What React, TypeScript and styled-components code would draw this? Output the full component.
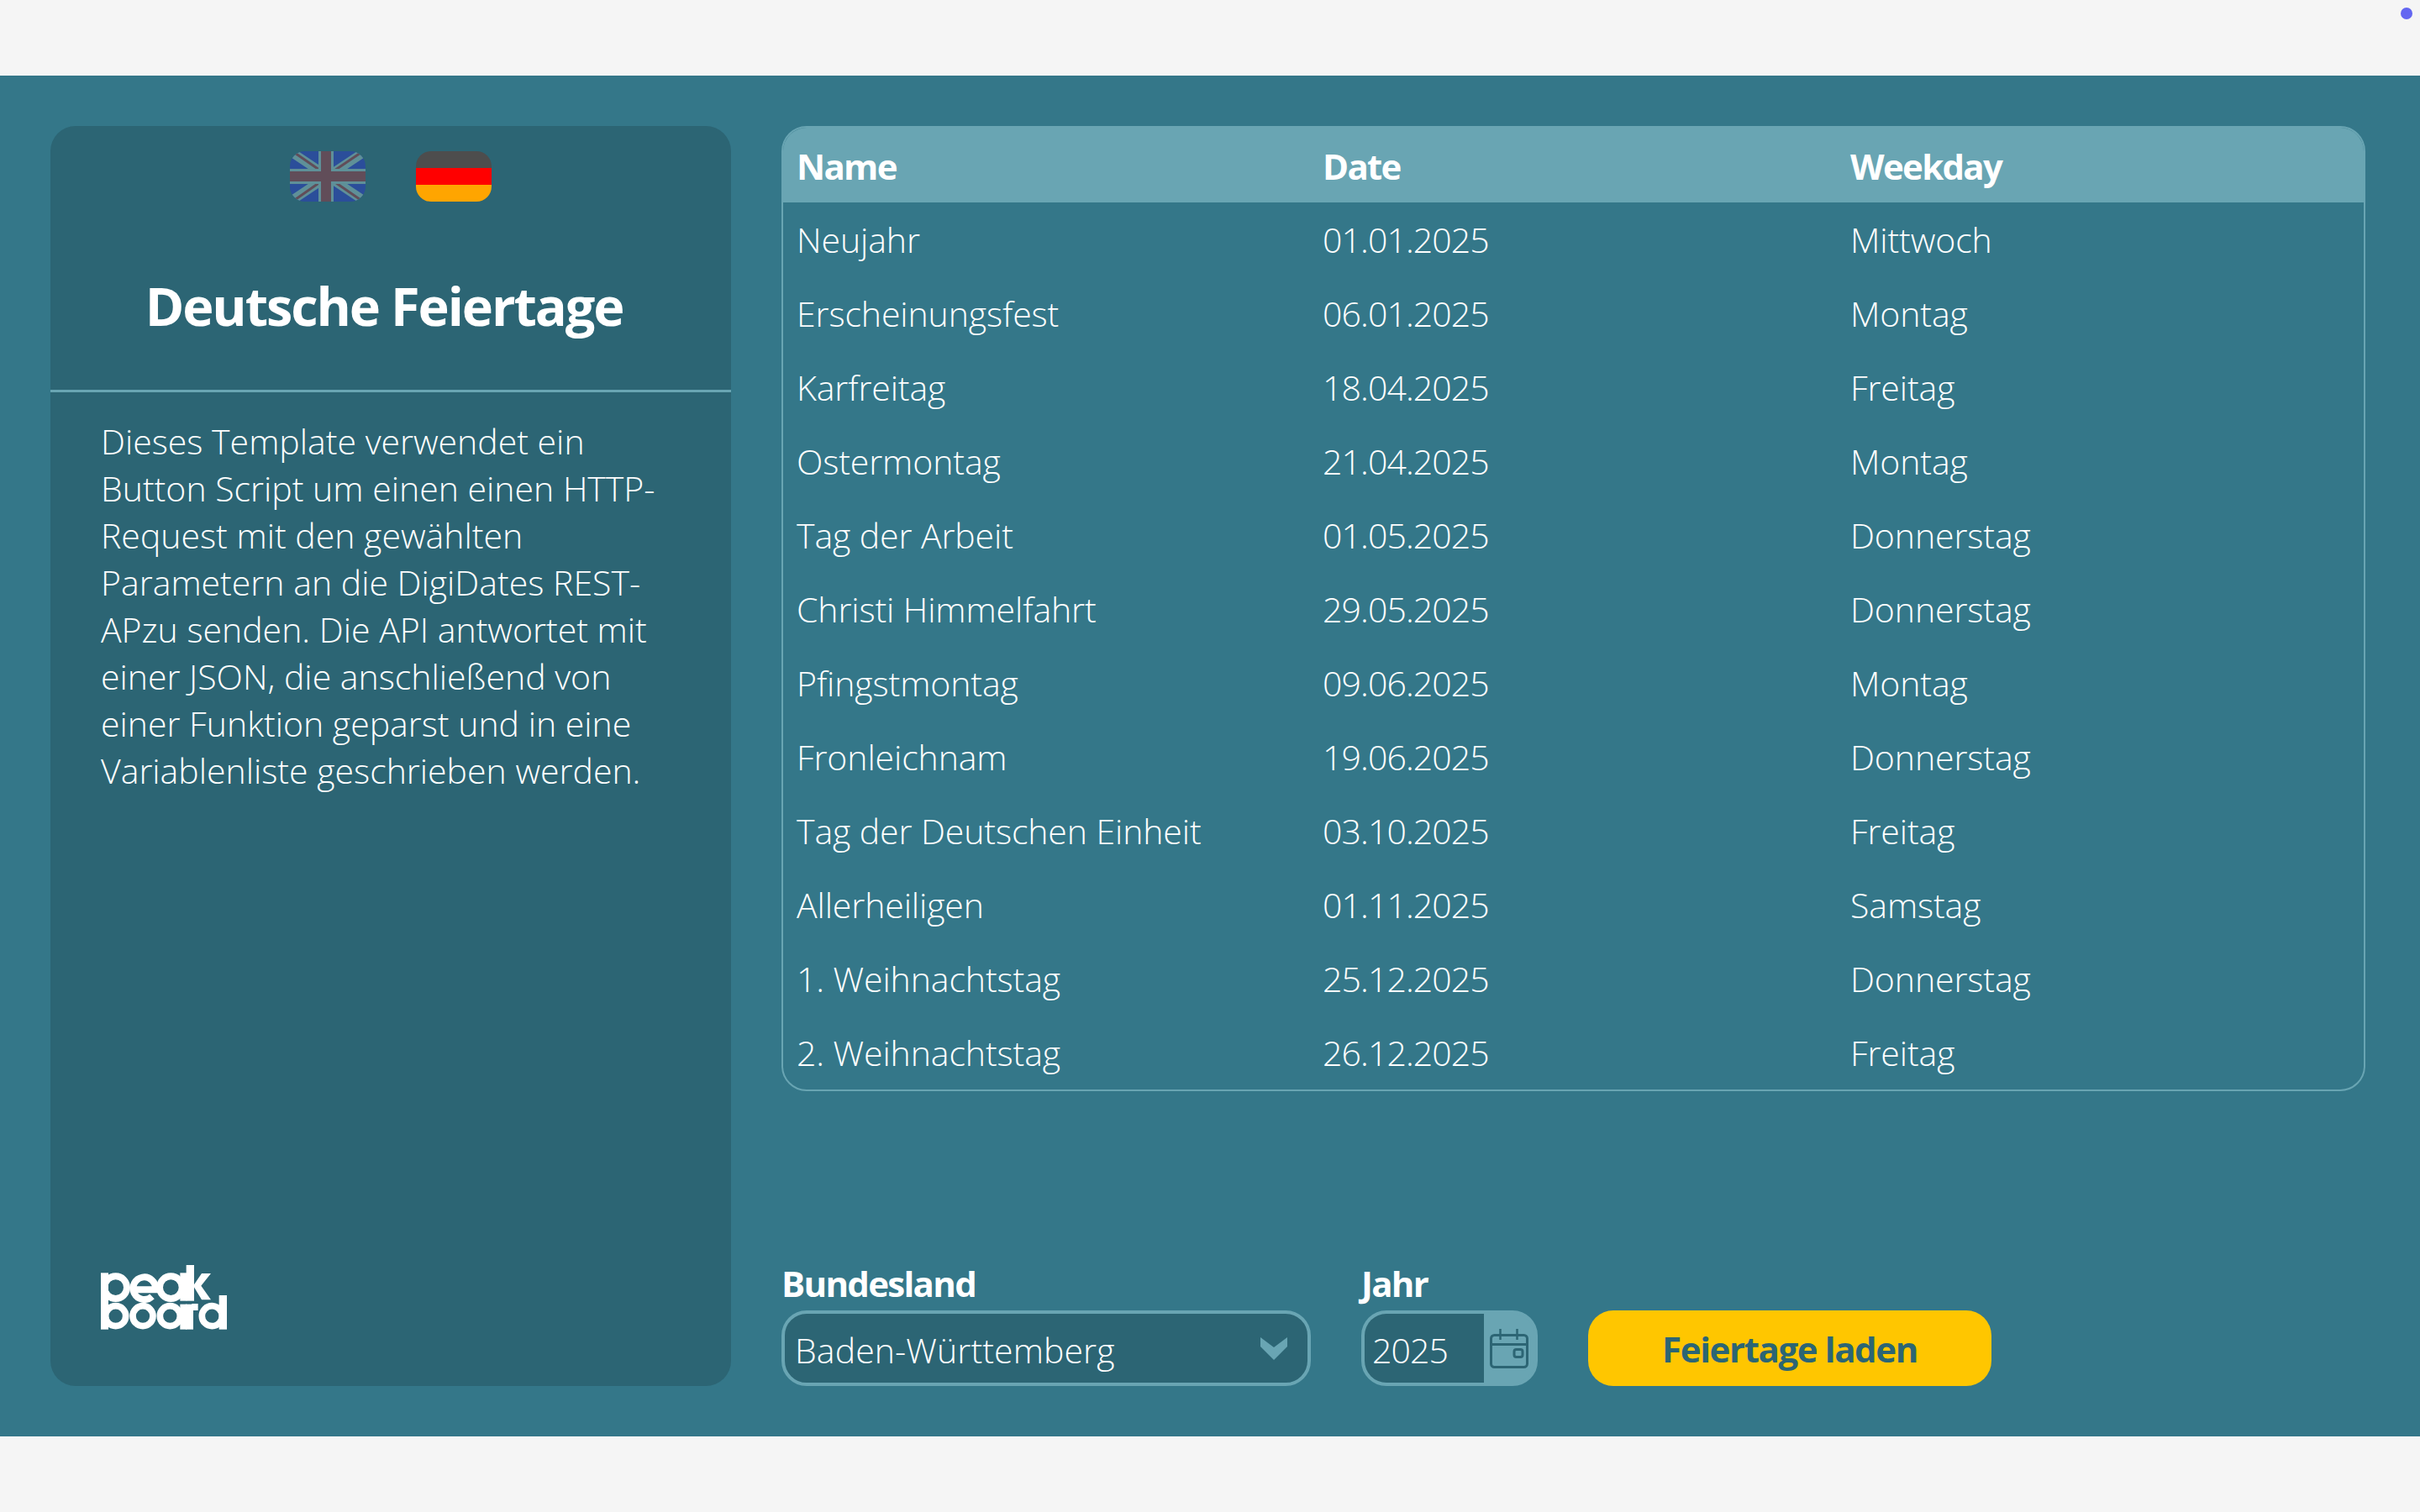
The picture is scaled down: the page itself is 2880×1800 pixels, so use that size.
import React from "react";
import styled, { createGlobalStyle } from "styled-components";

const Global = createGlobalStyle`
  html, body { margin: 0; padding: 0; background: #f5f5f5; }
  * { box-sizing: border-box; }
`;

const FONT = `"Open Sans", "Noto Sans", "Liberation Sans", sans-serif`;
const MAIN = "#347789";
const DARK = "#2c6574";
const LIGHT = "#69a5b3";

const Page = styled.div`
  position: relative;
  width: 2880px;
  height: 1800px;
  padding: 90px 0;
  background: #f5f5f5;
  font-family: ${FONT};
  color: #fff;
`;
const Dot = styled.span`
  position: absolute;
  top: 9px;
  right: 9px;
  width: 14px;
  height: 14px;
  border-radius: 50%;
  background: #6366f1;
`;
const Canvas = styled.main`
  display: flex;
  gap: 60px;
  height: 1620px;
  padding: 60px;
  background: ${MAIN};
`;
const Sidebar = styled.aside`
  display: flex;
  flex-direction: column;
  flex: 0 0 810px;
  border-radius: 30px;
  background: ${DARK};
`;
const SideHeader = styled.header`
  display: flex;
  flex-direction: column;
  align-items: center;
  height: 317px;
  padding-top: 30px;
  border-bottom: 3px solid ${LIGHT};
`;
const Flags = styled.div`
  display: flex;
  gap: 60px;
`;
const Flag = styled.svg`
  display: block;
  width: 90px;
  height: 60px;
  border-radius: 18px;
`;
const Title = styled.h1`
  margin: 83px 16px 0 0;
  font-size: 63px;
  line-height: 82px;
  font-weight: 700;
  letter-spacing: -2.1px;
`;
const Description = styled.p`
  margin: 0;
  padding: 30px 0 0 60px;
  font-size: 41px;
  line-height: 56px;
  font-weight: 300;
  letter-spacing: 0;
`;
const Logo = styled.svg`
  display: block;
  width: 160px;
  height: 90px;
  margin: auto 0 60px 55px;
`;
const Content = styled.section`
  display: flex;
  flex-direction: column;
  justify-content: space-between;
  flex: 1;
  min-width: 0;
`;
const Table = styled.table`
  width: 1885px;
  height: 1149px;
  table-layout: fixed;
  border-collapse: separate;
  border-spacing: 0;
  border: 2px solid ${LIGHT};
  border-radius: 30px;
  overflow: hidden;
`;
const HeadRow = styled.tr`
  height: 89px;
  background: ${LIGHT};
`;
const HeadCell = styled.th`
  padding: 2px 0 0 16px;
  text-align: left;
  font-size: 42px;
  font-weight: 700;
  letter-spacing: -1.7px;
  &:nth-child(1) { width: 626px; }
  &:nth-child(2) { width: 628px; }
`;
const Row = styled.tr`
  height: 88px;
`;
const Cell = styled.td`
  padding: 0 0 0 16px;
  font-size: 41px;
  font-weight: 300;
  letter-spacing: -0.1px;
  white-space: nowrap;
`;
const DateCell = styled(Cell)`
  letter-spacing: -0.9px;
`;
const Form = styled.form`
  display: flex;
  align-items: flex-end;
  gap: 60px;
  margin: 0;
`;
const Field = styled.div`
  display: flex;
  flex-direction: column;
`;
const Label = styled.label`
  height: 50px;
  font-size: 42px;
  line-height: 36px;
  font-weight: 700;
  letter-spacing: -1.7px;
`;
const Select = styled.div`
  display: flex;
  align-items: center;
  justify-content: space-between;
  width: 630px;
  height: 90px;
  padding: 0 24px 0 12px;
  border: 4px solid ${LIGHT};
  border-radius: 30px;
  background: ${DARK};
  font-size: 41px;
  font-weight: 300;
  letter-spacing: 0.1px;
`;
const SelectText = styled.span`
  padding-top: 3px;
`;
const Chevron = styled.svg`
  display: block;
  width: 32px;
  height: 27px;
`;
const DateBox = styled.div`
  display: flex;
  width: 210px;
  height: 90px;
  border: 4px solid ${LIGHT};
  border-radius: 30px;
  background: ${LIGHT};
`;
const DateValue = styled.div`
  display: flex;
  align-items: center;
  flex: 0 0 142px;
  padding: 3px 0 0 9px;
  border-radius: 26px 0 0 26px;
  background: ${DARK};
  font-size: 41px;
  font-weight: 300;
  letter-spacing: -0.9px;
`;
const DateIcon = styled.div`
  display: flex;
  align-items: center;
  justify-content: center;
  flex: 1;
`;
const CalendarSvg = styled.svg`
  display: block;
  width: 46px;
  height: 48px;
`;
const LoadButton = styled.button`
  width: 480px;
  height: 90px;
  padding: 0;
  border: 0;
  border-radius: 30px;
  background: #ffc600;
  color: ${DARK};
  font-family: ${FONT};
  font-size: 42px;
  font-weight: 700;
  letter-spacing: -1.4px;
`;

const holidays: [string, string, string][] = [
  ["Neujahr", "01.01.2025", "Mittwoch"],
  ["Erscheinungsfest", "06.01.2025", "Montag"],
  ["Karfreitag", "18.04.2025", "Freitag"],
  ["Ostermontag", "21.04.2025", "Montag"],
  ["Tag der Arbeit", "01.05.2025", "Donnerstag"],
  ["Christi Himmelfahrt", "29.05.2025", "Donnerstag"],
  ["Pfingstmontag", "09.06.2025", "Montag"],
  ["Fronleichnam", "19.06.2025", "Donnerstag"],
  ["Tag der Deutschen Einheit", "03.10.2025", "Freitag"],
  ["Allerheiligen", "01.11.2025", "Samstag"],
  ["1. Weihnachtstag", "25.12.2025", "Donnerstag"],
  ["2. Weihnachtstag", "26.12.2025", "Freitag"],
];

const lines = [
  "Dieses Template verwendet ein",
  "Button Script um einen einen HTTP-",
  "Request mit den gewählten",
  "Parametern an die DigiDates REST-",
  "APzu senden. Die API antwortet mit",
  "einer JSON, die anschließend von",
  "einer Funktion geparst und in eine",
  "Variablenliste geschrieben werden.",
];

const UkFlag = () => (
  <Flag viewBox="0 0 90 60" aria-label="English">
    <rect width="90" height="60" fill="#2b4e9a" />
    <path d="M0 0L90 60M90 0L0 60" stroke="#5f9098" strokeWidth="11" />
    <path d="M0 -2L42 27M90 -2L50 25M0 62L40 34M90 62L48 33" stroke="#614d59" strokeWidth="3" />
    <path d="M43 0V60M0 30H90" stroke="#5f9098" strokeWidth="18" />
    <path d="M43 0V60M0 30H90" stroke="#614d59" strokeWidth="12" />
  </Flag>
);

const DeFlag = () => (
  <Flag viewBox="0 0 90 60" aria-label="Deutsch">
    <rect width="90" height="20" fill="#4d4d4d" />
    <rect y="20" width="90" height="20" fill="#ff0000" />
    <rect y="40" width="90" height="20" fill="#ffa500" />
  </Flag>
);

const PeakboardLogo = () => (
  <Logo viewBox="0 0 480 270" aria-label="peakboard">
    <g fill="none" stroke="#fff">
      <g strokeWidth="24">
        <circle cx="68" cy="98" r="40" />
        <path d="M132 106H210A40 40 0 1 0 198 130" />
        <circle cx="265" cy="98" r="40" />
      </g>
      <g strokeWidth="23">
        <circle cx="68" cy="200" r="36" />
        <circle cx="165" cy="200" r="36" />
        <circle cx="262" cy="200" r="36" />
        <circle cx="412" cy="200" r="36" />
      </g>
    </g>
    <g fill="#fff">
      <rect x="15" y="46" width="27" height="202" />
      <rect x="298" y="46" width="24" height="100" />
      <rect x="320" y="18" width="28" height="128" />
      <path d="M345 92L375 48H408L373 92L408 142H375Z" />
      <rect x="298" y="158" width="24" height="90" />
      <rect x="318" y="158" width="27" height="90" />
      <rect x="340" y="156" width="22" height="24" />
      <rect x="437" y="126" width="28" height="122" />
    </g>
  </Logo>
);

const Calendar = () => (
  <CalendarSvg viewBox="14 10 46 48" fill="none" stroke={DARK} strokeWidth="3">
    <rect x="15.5" y="18.5" width="43" height="38" rx="4" />
    <path d="M15.5 29.5H58.5" />
    <path d="M26.5 11V24M46.5 11V24" strokeWidth="2.5" />
    <rect x="43" y="35.5" width="10" height="9" rx="2.5" />
  </CalendarSvg>
);

export default function App() {
  return (
    <>
      <Global />
      <Page>
        <Dot />
        <Canvas>
          <Sidebar>
            <SideHeader>
              <Flags>
                <UkFlag />
                <DeFlag />
              </Flags>
              <Title>Deutsche Feiertage</Title>
            </SideHeader>
            <Description>
              {lines.map((line) => (
                <React.Fragment key={line}>
                  {line}
                  <br />
                </React.Fragment>
              ))}
            </Description>
            <PeakboardLogo />
          </Sidebar>
          <Content>
            <Table>
              <thead>
                <HeadRow>
                  <HeadCell>Name</HeadCell>
                  <HeadCell>Date</HeadCell>
                  <HeadCell>Weekday</HeadCell>
                </HeadRow>
              </thead>
              <tbody>
                {holidays.map(([name, date, day]) => (
                  <Row key={name}>
                    <Cell>{name}</Cell>
                    <DateCell>{date}</DateCell>
                    <Cell>{day}</Cell>
                  </Row>
                ))}
              </tbody>
            </Table>
            <Form>
              <Field>
                <Label>Bundesland</Label>
                <Select>
                  <SelectText>Baden-Württemberg</SelectText>
                  <Chevron viewBox="0 0 32 27">
                    <path d="M0 0L16 12L32 0V11L16 27L0 11Z" fill={LIGHT} />
                  </Chevron>
                </Select>
              </Field>
              <Field>
                <Label>Jahr</Label>
                <DateBox>
                  <DateValue>2025</DateValue>
                  <DateIcon>
                    <Calendar />
                  </DateIcon>
                </DateBox>
              </Field>
              <LoadButton type="button">Feiertage laden</LoadButton>
            </Form>
          </Content>
        </Canvas>
      </Page>
    </>
  );
}
